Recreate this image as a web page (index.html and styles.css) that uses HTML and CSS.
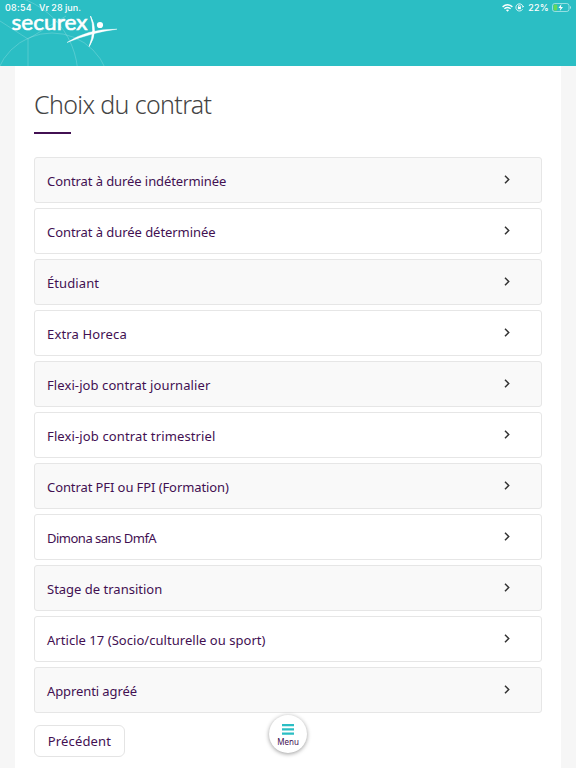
FILE: index.html
```html
<!DOCTYPE html>
<html lang="fr">
<head>
<meta charset="utf-8">
<title>Choix du contrat</title>
<link rel="stylesheet" href="styles.css">
</head>
<body>
<header class="header">
  <svg class="header-arcs" width="120" height="66" viewBox="0 0 120 66" fill="none" stroke="#fff" stroke-opacity=".2" stroke-width="1">
    <circle cx="52" cy="91" r="58"/><circle cx="-5" cy="77" r="83"/><path d="M0 21 28 39V66M28 39 66 16"/>
  </svg>
  <div class="status">
    <span class="time">08:54</span><span class="date">Vr 28 jun.</span>
    <svg class="wifi" width="11" height="8" viewBox="0 0 11 8" fill="none" stroke="#fff" stroke-width="1.4"><path d="M.6 2.9Q5.500-1.300 10.400 2.900M2.400 4.700Q5.500 2.200 8.600 4.700"/><path d="M3.900 6Q5.500 4.800 7.100 6L5.500 7.700Z" fill="#fff" stroke="none"/></svg>
    <svg class="lock" width="9" height="9" viewBox="0 0 9 9" fill="none" stroke="#fff" stroke-width=".8"><path d="M7.600 6.200A3.600 3.600 0 1 1 8 3.700M6.900 3.400 8 4.300 8.800 3"/><path d="M3.500 4V3.100a.9.9 0 0 1 1.800 0V4"/><path d="M2.900 3.900h3v2.300h-3z" fill="#fff" stroke="none"/></svg>
    <span class="percent">22%</span>
    <svg class="battery" width="20" height="9" viewBox="0 0 20 9"><rect x=".5" y=".5" width="16.500" height="8" rx="2.200" fill="none" stroke="#fff" stroke-opacity=".5"/><rect x="1.600" y="1.600" width="3.600" height="5.800" rx="1" fill="#65d957"/><path d="M18 3v3q1-.4 1-1.500T18 3" fill="#fff" fill-opacity=".6"/><path d="M9.400 1 6.500 5h2l-.7 3L11 4H8.900Z" fill="#fff"/></svg>
  </div>
  <svg class="logo" width="108" height="34" viewBox="0 0 108 34" role="img" aria-label="securex">
    <text class="logo-text" x="1.500" y="16" textLength="76" lengthAdjust="spacingAndGlyphs">securex</text>
    <g fill="#fff"><circle cx="90" cy="11" r="3.100"/><path d="M57 28.500Q78 14.500 107 15.200 83 18 57 28.500Z" stroke="#fff" stroke-width=".4"/><path d="M80.500 2Q89 17 79.200 32.500 85.500 16 80.500 2Z" stroke="#fff" stroke-width=".7"/></g>
  </svg>
</header>
<main class="page">
  <h1 class="title"><span>Choix du contrat</span></h1>
  <ul class="list">
    <li class="row"><span class="t1">Contrat à durée indéterminée</span><svg class="chevron" viewBox="0 0 6 9"><path d="m1 .8 3.700 3.700L1 8.200"/></svg></li>
    <li class="row"><span class="t2">Contrat à durée déterminée</span><svg class="chevron" viewBox="0 0 6 9"><path d="m1 .8 3.700 3.700L1 8.200"/></svg></li>
    <li class="row"><span class="t3">Étudiant</span><svg class="chevron" viewBox="0 0 6 9"><path d="m1 .8 3.700 3.700L1 8.200"/></svg></li>
    <li class="row"><span class="t4">Extra Horeca</span><svg class="chevron" viewBox="0 0 6 9"><path d="m1 .8 3.700 3.700L1 8.200"/></svg></li>
    <li class="row"><span class="t5">Flexi-job contrat journalier</span><svg class="chevron" viewBox="0 0 6 9"><path d="m1 .8 3.700 3.700L1 8.200"/></svg></li>
    <li class="row"><span class="t6">Flexi-job contrat trimestriel</span><svg class="chevron" viewBox="0 0 6 9"><path d="m1 .8 3.700 3.700L1 8.200"/></svg></li>
    <li class="row"><span class="t7">Contrat PFI ou FPI (Formation)</span><svg class="chevron" viewBox="0 0 6 9"><path d="m1 .8 3.700 3.700L1 8.200"/></svg></li>
    <li class="row"><span class="t8">Dimona sans DmfA</span><svg class="chevron" viewBox="0 0 6 9"><path d="m1 .8 3.700 3.700L1 8.200"/></svg></li>
    <li class="row"><span class="t9">Stage de transition</span><svg class="chevron" viewBox="0 0 6 9"><path d="m1 .8 3.700 3.700L1 8.200"/></svg></li>
    <li class="row"><span class="t10">Article 17 (Socio/culturelle ou sport)</span><svg class="chevron" viewBox="0 0 6 9"><path d="m1 .8 3.700 3.700L1 8.200"/></svg></li>
    <li class="row"><span class="t11">Apprenti agréé</span><svg class="chevron" viewBox="0 0 6 9"><path d="m1 .8 3.700 3.700L1 8.200"/></svg></li>
  </ul>
  <button class="back">Précédent</button>
</main>
<button class="menu"><svg width="12" height="11" viewBox="0 0 12 11" fill="#2bbec4"><path d="M0 0h12v2.300H0zM0 4.200h12v2.300H0zM0 8.400h12v2.300H0z"/></svg><span>Menu</span></button>
</body>
</html>
```

FILE: styles.css
```css
* { box-sizing: border-box; }
body { margin: 0; height: 768px; overflow: hidden; background: #f6f6f6; font-family: "Noto Sans", sans-serif; color: #421052; }
.header { position: relative; height: 66px; background: #2bbec4; overflow: hidden; }
.header-arcs { position: absolute; left: 0; top: 0; }
.status { position: relative; display: flex; align-items: center; height: 15px; padding: 0 4px 0 5px; font: 500 9px/11px Inter, sans-serif; color: #fff; }
.time { width: 34px; letter-spacing: .25px; }
.date { flex: 1; letter-spacing: .02px; }
.wifi { margin-right: 2px; }
.lock { margin-right: 4px; }
.percent { margin-right: 3px; letter-spacing: .2px; }
.logo { position: relative; display: block; margin: -1px 0 0 10px; overflow: visible; }
.logo-text { font: 400 22px Lato, sans-serif; fill: #fff; stroke: #fff; stroke-width: .6px; }
.page { height: 702px; margin: 0 15px; padding: 21px 19px 0; background: #fff; }
.title { margin: 0; height: 70px; font: 300 25px/34px "Noto Sans", sans-serif; color: #444; letter-spacing: -.65px; }
.title::after { content: ""; display: block; width: 37px; height: 2px; margin-top: 11px; background: #421052; }
.list { display: flex; flex-direction: column; gap: 5px; margin: 0; padding: 0; list-style: none; }
.row { display: flex; align-items: center; justify-content: space-between; height: 46px; padding: 1px 31px 0 12px; border: 1px solid #e6e6e6; border-radius: 3px; font-size: 13px; white-space: nowrap; }
.row:nth-child(odd) { background: #f9f9f9; }
.t1 { letter-spacing: -.08px; }
.t2 { letter-spacing: -.06px; }
.t3 { letter-spacing: .1px; }
.t4 { letter-spacing: .15px; }
.t5 { letter-spacing: .09px; }
.t6 { letter-spacing: .13px; }
.t7 { letter-spacing: -.09px; }
.t8 { letter-spacing: -.5px; }
.t10 { letter-spacing: .04px; }
.t11 { letter-spacing: -.1px; }
.chevron { width: 6px; height: 9px; margin-top: -3px; fill: none; stroke: #333; stroke-width: 1.500; }
.back { display: block; width: 91px; height: 32px; margin-top: 12px; padding: 0; border: 1px solid #e4e4e4; border-radius: 6px; background: #fff; font: 400 13px "Noto Sans", sans-serif; letter-spacing: .15px; color: #421052; }
.menu { position: absolute; left: 269px; top: 715px; width: 38px; height: 38px; padding: 3px 0 0; border: 0; border-radius: 50%; background: #fff; box-shadow: 0 1px 4px rgba(0, 0, 0, .4); display: flex; flex-direction: column; align-items: center; justify-content: center; gap: 1px; font: 400 8px/11px "Noto Sans", sans-serif; color: #421052; }
```
